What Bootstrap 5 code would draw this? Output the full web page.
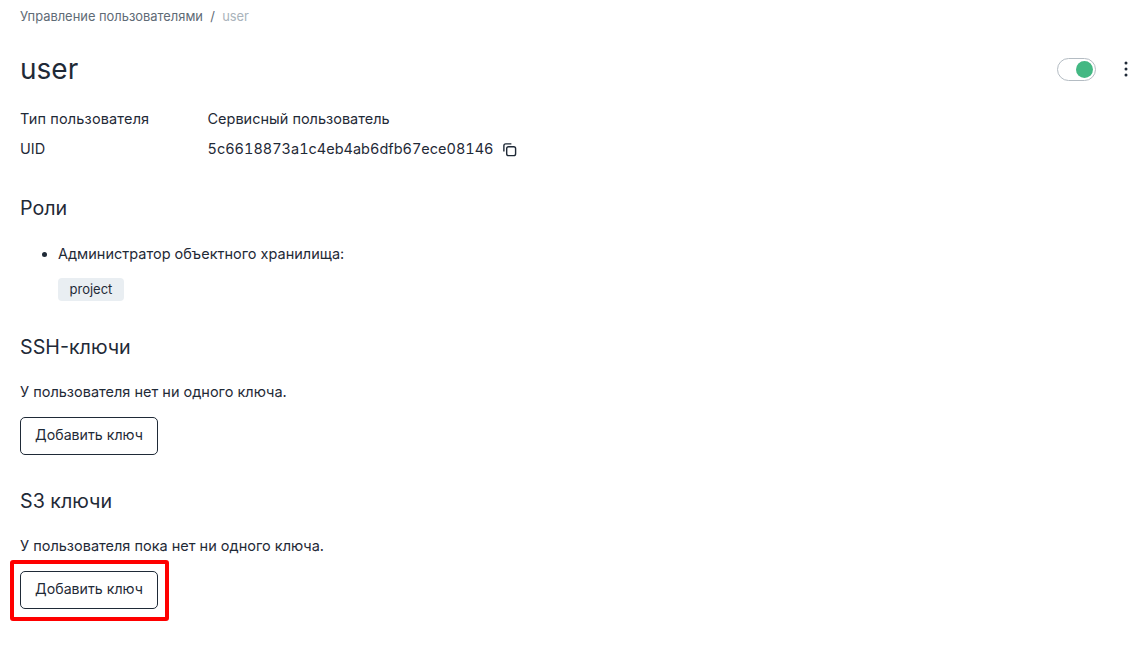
<!DOCTYPE html>
<html lang="ru">
<head>
    <meta charset="UTF-8">
    <title>user</title>
    <link href="https://cdn.jsdelivr.net/npm/bootstrap@5.3.0/dist/css/bootstrap.min.css" rel="stylesheet">
    <style>
        body {
            font-family: Inter, "Noto Sans", sans-serif;
            font-size: 14.5px;
            color: #1f2a37;
            background: #fff;
            min-height: 100vh;
        }
        .page-wrap { padding: 0 15px 38px 20px; }
        .crumbs { height: 33px; font-size: 12.9px; color: #5f6b76; padding-top: 7px; }
        .crumbs .here { color: #a9b3bb; }
        .title-row { height: 38px; margin-top: 17px; }
        .page-title { font-size: 28px; font-weight: 400; margin: 0; line-height: 38px; }
        .info-block { margin-top: 15.5px; }
        .info-row { height: 30.5px; align-items: center; }
        .info-label { width: 187.5px; }
        .type-label { letter-spacing: 0.15px; }
        .uid-text { font-feature-settings: "tnum"; }
        .copy-icon { margin-left: 8px; }
        .sec-title { font-size: 19.7px; font-weight: 400; margin: 29px 0 0; line-height: 28px; }
        .sec-next { margin-top: 32px; }
        .sec-text { line-height: 22px; margin: 20px 0 14px; }
        .role-list { margin: 21px 0 0; padding-left: 38px; line-height: 22px; }
        .role-chip { background: #e9eef2; border-radius: 4px; font-size: 13px; padding: 0 11.5px; height: 23px; line-height: 23px; display: inline-block; margin: 13px 0 0 38px; vertical-align: top; }
        .chip-line { height: 36px; }
        .add-btn { border: 1px solid #1f2a37; border-radius: 5px; font-size: 14.2px; color: #1f2a37; width: 138px; height: 38px; padding: 0 0 2px; background: #fff; display: block; }
        .toggle-track { width: 39px; height: 23px; border: 1px solid #b4bcc3; border-radius: 12px; position: relative; }
        .toggle-knob { position: absolute; right: 2px; top: 2px; width: 17px; height: 17px; border-radius: 50%; background: #43b883; }
        .btn-marked { position: relative; width: 138px; }
        .red-frame { position: absolute; left: -10px; right: -11px; top: -11px; bottom: -12px; border: 4px solid #f00; border-radius: 3px; pointer-events: none; }
        .dots-gap { gap: 27px; }
    </style>
</head>
<body>
<div class="page-wrap">
    <div class="crumbs">Управление пользователями &nbsp;/&nbsp; <span class="here">user</span></div>
    <div class="title-row d-flex justify-content-between align-items-center">
        <h1 class="page-title">user</h1>
        <div class="d-flex align-items-center dots-gap">
            <div class="toggle-track"><div class="toggle-knob"></div></div>
            <svg width="6" height="16" viewBox="0 0 6 16"><circle cx="3" cy="2" r="1.5" fill="#1f2a37"/><circle cx="3" cy="8" r="1.5" fill="#1f2a37"/><circle cx="3" cy="14" r="1.5" fill="#1f2a37"/></svg>
        </div>
    </div>
    <div class="info-block">
        <div class="d-flex info-row"><div class="info-label type-label">Тип пользователя</div><div>Сервисный пользователь</div></div>
        <div class="d-flex info-row"><div class="info-label">UID</div><div class="uid-text">5c6618873a1c4eb4ab6dfb67ece08146</div>
            <svg class="copy-icon" width="15" height="15" viewBox="0 0 16 16" fill="none" stroke="#1f2a37" stroke-width="1.5"><rect x="5" y="5" width="9.5" height="9.5" rx="2"/><path d="M2 10V4a2 2 0 0 1 2-2h6"/></svg>
        </div>
    </div>
    <h2 class="sec-title">Роли</h2>
    <ul class="role-list">
        <li>Администратор объектного хранилища:</li>
    </ul>
    <div class="chip-line"><span class="role-chip">project</span></div>
    <h2 class="sec-title sec-next">SSH-ключи</h2>
    <p class="sec-text">У пользователя нет ни одного ключа.</p>
    <button class="btn add-btn" type="button">Добавить ключ</button>
    <h2 class="sec-title sec-next">S3 ключи</h2>
    <p class="sec-text">У пользователя пока нет ни одного ключа.</p>
    <div class="btn-marked">
        <button class="btn add-btn" type="button">Добавить ключ</button>
        <div class="red-frame"></div>
    </div>
</div>
<script src="https://cdn.jsdelivr.net/npm/bootstrap@5.3.0/dist/js/bootstrap.bundle.min.js"></script>
</body>
</html>
